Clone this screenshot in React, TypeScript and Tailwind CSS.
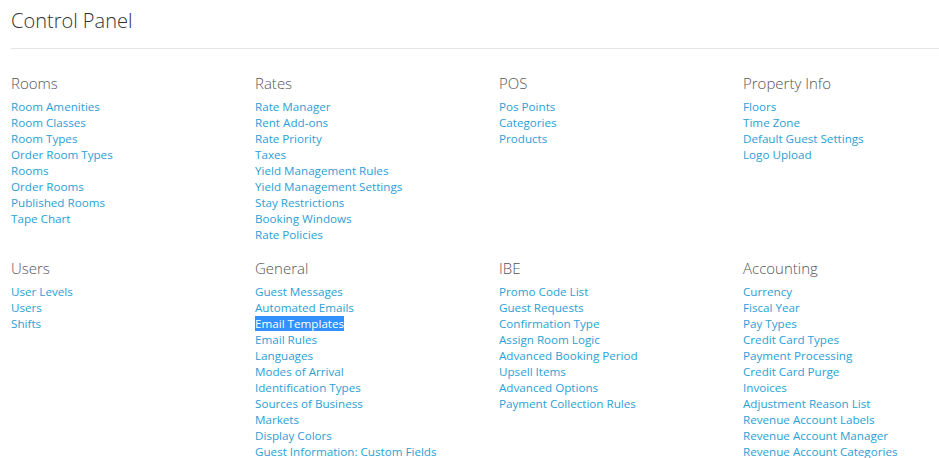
import React from "react";

const rowOne = [
  {
    title: "Rooms",
    links: ["Room Amenities", "Room Classes", "Room Types", "Order Room Types", "Rooms", "Order Rooms", "Published Rooms", "Tape Chart"],
  },
  {
    title: "Rates",
    links: [
      "Rate Manager",
      "Rent Add-ons",
      "Rate Priority",
      "Taxes",
      "Yield Management Rules",
      "Yield Management Settings",
      "Stay Restrictions",
      "Booking Windows",
      "Rate Policies",
    ],
  },
  { title: "POS", links: ["Pos Points", "Categories", "Products"] },
  { title: "Property Info", links: ["Floors", "Time Zone", "Default Guest Settings", "Logo Upload"] },
];

const rowTwo = [
  { title: "Users", links: ["User Levels", "Users", "Shifts"] },
  {
    title: "General",
    links: [
      "Guest Messages",
      "Automated Emails",
      "Email Templates",
      "Email Rules",
      "Languages",
      "Modes of Arrival",
      "Identification Types",
      "Sources of Business",
      "Markets",
      "Display Colors",
      "Guest Information: Custom Fields",
    ],
  },
  {
    title: "IBE",
    links: [
      "Promo Code List",
      "Guest Requests",
      "Confirmation Type",
      "Assign Room Logic",
      "Advanced Booking Period",
      "Upsell Items",
      "Advanced Options",
      "Payment Collection Rules",
    ],
  },
  {
    title: "Accounting",
    links: [
      "Currency",
      "Fiscal Year",
      "Pay Types",
      "Credit Card Types",
      "Payment Processing",
      "Credit Card Purge",
      "Invoices",
      "Adjustment Reason List",
      "Revenue Account Labels",
      "Revenue Account Manager",
      "Revenue Account Categories",
    ],
  },
];

type Section = { title: string; links: string[] };

function Block({ section }: { section: Section }) {
  return (
    <div className="flex flex-col">
      <h3 className="text-[15px] leading-[20px] font-light text-[#555]">{section.title}</h3>
      <ul className="mt-[6px] flex flex-col">
        {section.links.map((l) => (
          <li key={l} className="text-[11.65px] leading-[16px] text-[#2a9fd6]">
            {l === "Email Templates" ? <span className="bg-[#3390ff] text-white">{l}</span> : <a href="#">{l}</a>}
          </li>
        ))}
      </ul>
    </div>
  );
}

export default function App() {
  return (
    <div className="min-h-screen bg-white pl-[11px] font-['Open_Sans',sans-serif] overflow-hidden">
      <h1 className="pt-[7px] text-[20px] leading-[28px] font-light text-[#333]">Control Panel</h1>
      <div className="mt-[13px] border-t border-[#e5e5e5]" />
      <div className="mt-[24px] grid grid-cols-[244px_244px_244px_244px]">
        {rowOne.map((s) => (
          <Block key={s.title} section={s} />
        ))}
      </div>
      <div className="mt-[15px] grid grid-cols-[244px_244px_244px_244px]">
        {rowTwo.map((s) => (
          <Block key={s.title} section={s} />
        ))}
      </div>
    </div>
  );
}
